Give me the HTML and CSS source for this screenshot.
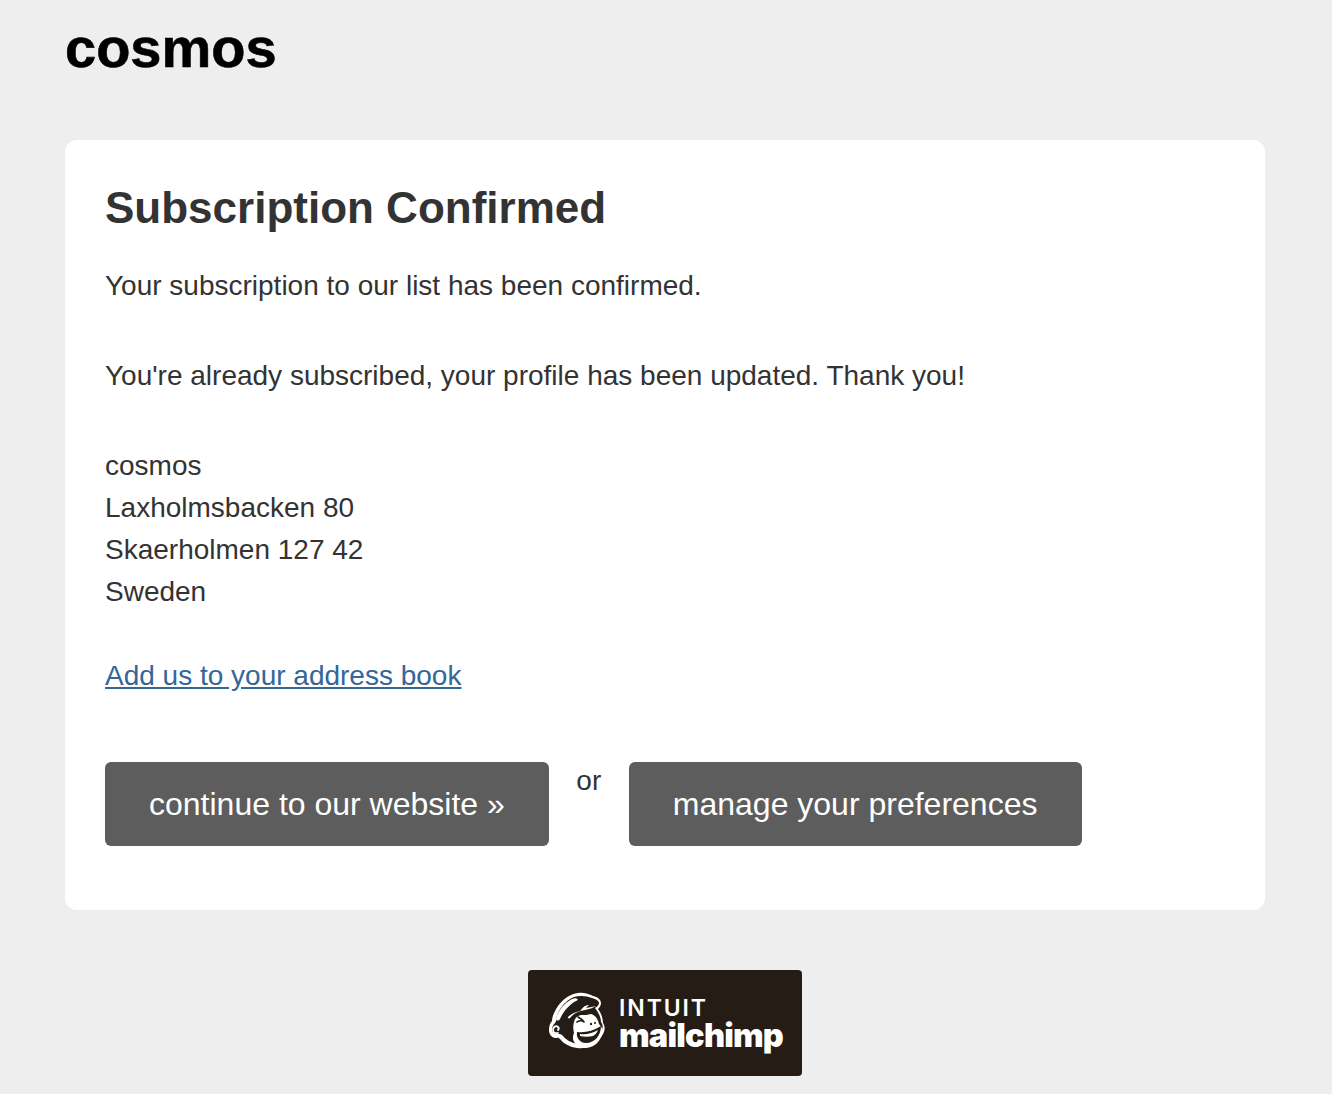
FILE: index.html
```html
<!DOCTYPE html>
<html lang="en">
<head>
<meta charset="utf-8">
<title>Subscription Confirmed</title>
<link rel="stylesheet" href="styles.css">
</head>
<body>
<div class="page">
  <header class="brand">cosmos</header>
  <main class="card">
    <h1 class="title">Subscription Confirmed</h1>
    <p class="para first">Your subscription to our list has been confirmed.</p>
    <p class="para">You're already subscribed, your profile has been updated. Thank you!</p>
    <address class="para addr">cosmos<br>Laxholmsbacken 80<br>Skaerholmen 127 42<br>Sweden</address>
    <p class="para vcard"><a class="link" href="#">Add us to your address book</a></p>
    <div class="actions">
      <a class="btn" href="#">continue to our website »</a>
      <span class="or">or</span>
      <a class="btn wide" href="#">manage your preferences</a>
    </div>
  </main>
  <footer class="foot">
    <a class="badge" href="#">
      <svg class="chimp" viewBox="8 10 62 66" width="62" height="66" aria-hidden="true">
        <path class="w" d="M10 50c0-4 1-7 3-9 0-4 2-9 6-15 5-7 12-12 20-13 5-1 11 1 15 3 5 1 8 4 8 7 0 2-1 4-3 6 3 4 5 9 5 14 2 3 2 6 1 9-2 5-6 9-10 12-5 3-11 5-17 4-7-1-13-4-17-9-2-2-3-1-5-1-4-1-6-4-6-8z"/>
        <path class="k" d="M13 50c0-3 1-5 3-7 2-2 1-6 3-10 3-7 9-13 16-16 6-2 13-1 18 1 4 1 7 3 7 5 0 2-2 4-4 5 3 4 6 9 6 14 2 3 2 5 1 8-2 4-5 8-9 10-5 3-10 4-15 4-6-1-12-4-15-8-2-2-3-2-5-2-3 0-6-2-6-4z"/>
        <path class="w" d="M17 39c1-7 8-16 16-20 3-1 5-1 6 1-7 3-14 10-18 19-1 2-4 2-4 0z"/>
        <path class="w" d="M29 37c3-3 7-5 12-6 2-2 4-6 9-6l-3 3c4-1 7-1 10-2-3 2-7 3-11 4-6 1-11 3-15 8-1 1-3 0-2-1z"/>
        <path class="w" d="M35 53c-1-4-1-8 0-11 1-4 3-6 7-7 4 0 7 0 10-1 4 1 7 5 8 10 3 3 5 7 3 11-3 8-9 13-17 13-6 0-11-4-12-9 0-2 0-4 1-6z"/>
        <path class="k" d="M38 52c8 1 16-1 24-6 0 9-6 17-15 17-6 0-10-5-9-11z"/>
        <path class="w" d="M41 54c6 1 13-1 18-4-1 3-3 5-5 6-4 1-9 1-13 0z"/>
        <path class="wink" d="M38 42c3-2 5-2 7 0m-6-5c2 1 4 2 6 5"/>
        <circle class="k" cx="52" cy="44" r="1.2"/>
        <circle class="k" cx="56" cy="43" r="1"/>
        <path class="ear" d="M19 53c-3 1-5-1-5-3 0-3 3-5 5-3 1 1 1 2 0 3"/>
      </svg>
      <span class="wordmark">
        <span class="intuit">INTUIT</span>
        <span class="mc">mailchimp</span>
      </span>
    </a>
  </footer>
</div>
</body>
</html>
```
FILE: styles.css
```css
* { box-sizing: border-box; }
html, body { margin: 0; padding: 0; }
body {
  background: #eeeeee;
  color: #333333;
  font-family: Helvetica, "Liberation Sans", Arial, sans-serif;
  font-size: 28px;
  line-height: 42px;
}
.page {
  width: 1200px;
  margin-left: 65px;
  height: 1094px;
  overflow: hidden;
}
.brand {
  height: 140px;
  padding-top: 13px;
  color: #000000;
  font-size: 56px;
  font-weight: 700;
  line-height: 70px;
  -webkit-text-stroke: 0.6px #000000;
}
.card {
  height: 770px;
  padding: 40px 40px 0;
  background: #ffffff;
  border-radius: 12px;
}
.title {
  margin: 0;
  height: 56px;
  color: #333333;
  font-size: 44px;
  font-weight: 700;
  line-height: 56px;
}
.para { margin: 48px 0 0; }
.first { margin-top: 29px; }
.addr { font-style: normal; }
.vcard { margin-top: 42px; }
.link { color: #336699; text-decoration: underline; }
.actions {
  display: flex;
  align-items: flex-start;
  margin-top: 65px;
}
.btn {
  display: block;
  height: 84px;
  padding: 21px 44px;
  color: #ffffff;
  background: #5d5d5d;
  border-radius: 6px;
  font-size: 32px;
  text-decoration: none;
}
.wide { padding-right: 45px; }
.or {
  width: 80px;
  text-align: center;
  margin-top: -2px;
}
.foot {
  display: flex;
  justify-content: center;
  margin-top: 60px;
}
.badge {
  display: flex;
  align-items: center;
  width: 274px;
  height: 106px;
  padding-left: 19px;
  gap: 10px;
  background: #241c15;
  border-radius: 4px;
  color: #ffffff;
  text-decoration: none;
}
.chimp { flex: none; }
.w { fill: #ffffff; }
.k { fill: #241c15; }
.wink { fill: none; stroke: #241c15; stroke-width: 1.6; stroke-linecap: round; }
.ear { fill: none; stroke: #ffffff; stroke-width: 1.8; stroke-linecap: round; }
.wordmark {
  display: flex;
  flex-direction: column;
  gap: 2px;
  font-family: Inter, "Liberation Sans", sans-serif;
}
.intuit {
  font-size: 23px;
  font-weight: 600;
  line-height: 24px;
  letter-spacing: 1.9px;
}
.mc {
  font-size: 32.5px;
  font-weight: 900;
  line-height: 28px;
  letter-spacing: -0.8px;
}
```
